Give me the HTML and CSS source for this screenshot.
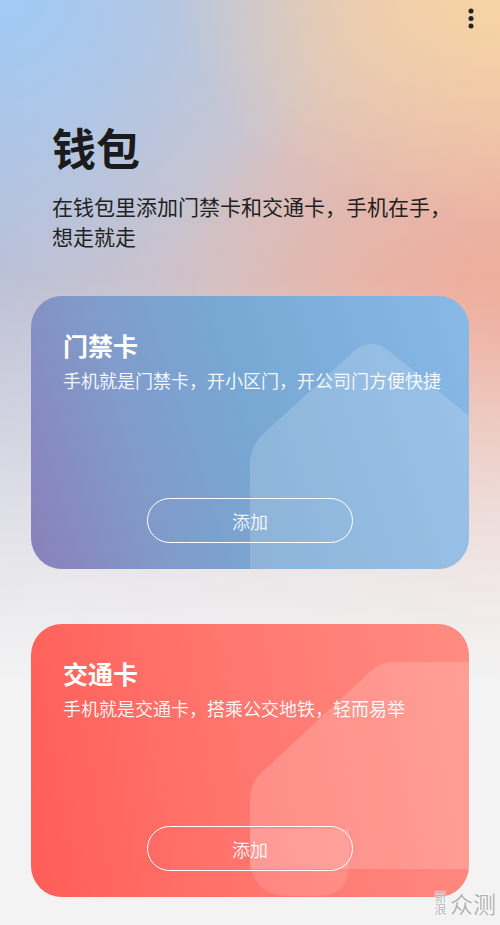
FILE: index.html
```html
<!DOCTYPE html>
<html lang="zh-CN">
<head>
<meta charset="utf-8">
<title>钱包</title>
<link rel="stylesheet" href="styles.css">
</head>
<body>
<div class="page">
  <header class="topbar">
    <button class="more" aria-label="更多">
      <svg width="8" height="24" viewBox="0 0 8 24"><circle cx="4" cy="4" r="2.5" fill="#222"/><circle cx="4" cy="11.5" r="2.5" fill="#222"/><circle cx="4" cy="19" r="2.5" fill="#222"/></svg>
    </button>
  </header>
  <section class="intro">
    <h1 class="title">钱包</h1>
    <p class="subtitle">在钱包里添加门禁卡和交通卡，手机在手，想走就走</p>
  </section>
  <section class="cards">
    <article class="card card-door">
      <svg class="deco" viewBox="0 0 438 273" preserveAspectRatio="none">
        <path d="M219,273 V168 Q219,150 233,137 L323,55 Q340,41 357,54 L438,120 V273 Z" fill="#ffffff" fill-opacity="0.17"/>
      </svg>
      <h2 class="card-title">门禁卡</h2>
      <p class="card-desc">手机就是门禁卡，开小区门，开公司门方便快捷</p>
      <button class="add-btn">添加</button>
    </article>
    <article class="card card-transit">
      <svg class="deco" viewBox="0 0 438 273" preserveAspectRatio="none">
        <path d="M219,245 V176 Q219,160 230,149 L340,47 Q350,38 364,38 H438 V245 Z" fill="#ffffff" fill-opacity="0.17"/>
        <path d="M219,205 V236 Q222,272 258,272 H286 Q318,272 318,240 V205 Z" fill="#ffffff" fill-opacity="0.12"/>
      </svg>
      <h2 class="card-title">交通卡</h2>
      <p class="card-desc">手机就是交通卡，搭乘公交地铁，轻而易举</p>
      <button class="add-btn">添加</button>
    </article>
  </section>
  <div class="watermark"><span class="wm-small">新浪</span><span class="wm-big">众测</span></div>
</div>
</body>
</html>
```
FILE: styles.css
```css
* { box-sizing: border-box; }
html, body { margin: 0; padding: 0; }
body {
  width: 500px;
  height: 925px;
  overflow: hidden;
  font-family: "Noto Sans CJK SC", "Noto Sans", sans-serif;
}
.page {
  position: relative;
  width: 500px;
  height: 925px;
  background:
    linear-gradient(180deg, rgba(243,243,243,0) 0%, rgba(243,243,243,0) 30%, rgba(240,238,240,0.8) 60%, #f3f3f3 74%),
    radial-gradient(ellipse 65% 24% at 100% 0%, rgba(247,212,163,1) 0%, rgba(247,212,163,0) 100%),
    radial-gradient(ellipse 70% 32% at 100% 36%, rgba(238,170,152,1) 0%, rgba(238,170,152,0) 100%),
    radial-gradient(ellipse 70% 32% at 0% 0%, rgba(160,202,245,1) 0%, rgba(160,202,245,0) 100%),
    linear-gradient(90deg, #bcc0d6 0%, #d2c4c8 50%, #e9c0b2 100%);
}
.topbar {
  height: 40px;
  display: flex;
  justify-content: flex-end;
  padding: 4px 25px 0 0;
}
.more {
  border: 0;
  background: none;
  padding: 3px 0 0 0;
  width: 8px;
  height: 32px;
  display: flex;
  align-items: flex-start;
}
.intro {
  padding: 81px 0 0 52px;
}
.title {
  margin: 0;
  font-size: 44px;
  line-height: 52px;
  font-weight: 700;
  color: #1b1b1b;
}
.subtitle {
  margin: 18px 0 0;
  max-width: 410px;
  font-size: 21px;
  line-height: 30px;
  color: #222;
}
.cards {
  display: flex;
  flex-direction: column;
  gap: 55px;
  padding: 45px 31px 0;
}
.card {
  position: relative;
  height: 273px;
  border-radius: 31px;
  overflow: hidden;
  display: flex;
  flex-direction: column;
  padding: 34px 32px 26px;
  color: #fff;
}
.card-door {
  background: linear-gradient(72deg, #8a80ba 0%, #809ccb 28%, #78a7d3 50%, #88b9e7 100%);
}
.card-transit {
  background: linear-gradient(80deg, #ff5d56 0%, #ff756e 45%, #ff8c82 100%);
}
.deco {
  position: absolute;
  left: 0;
  top: 0;
  width: 100%;
  height: 100%;
}
.card-title {
  position: relative;
  margin: 0;
  font-size: 25px;
  line-height: 30px;
  font-weight: 700;
}
.card-desc {
  position: relative;
  margin: 8px 0 0;
  font-size: 18px;
  line-height: 24px;
  color: rgba(255,255,255,0.92);
  white-space: nowrap;
}
.add-btn {
  position: relative;
  margin-top: auto;
  align-self: center;
  width: 206px;
  height: 45px;
  border: 1.5px solid #fff;
  border-radius: 23px;
  background: transparent;
  color: rgba(255,255,255,0.88);
  font-family: inherit;
  font-size: 18px;
  line-height: 1;
  padding: 0;
}
.watermark {
  position: absolute;
  right: 4px;
  bottom: 8px;
  display: flex;
  align-items: center;
  gap: 4px;
  color: rgba(165,165,165,0.85);
  text-shadow: 0 0 2px #fff, 0 0 2px #fff;
}
.wm-small {
  writing-mode: vertical-rl;
  font-size: 12px;
  line-height: 12px;
}
.wm-big {
  font-size: 23px;
  line-height: 28px;
}
```
